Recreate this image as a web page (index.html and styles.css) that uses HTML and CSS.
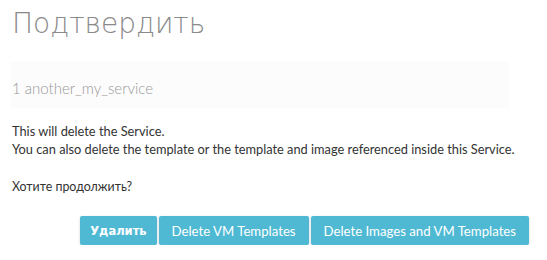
FILE: index.html
```html
<!DOCTYPE html>
<html lang="ru">
<head>
    <meta charset="UTF-8">
    <title>Подтвердить</title>
    <link rel="stylesheet" href="styles.css">
</head>
<body>
    <div class="dialog">
        <h2 class="dialog-title">Подтвердить</h2>
        <div class="dialog-body">
            <div class="resource-box">
                <span class="resource-name">1 another_my_service</span>
            </div>
            <p class="msg">This will delete the Service.<br>You can also delete the template or the template and image referenced inside this Service.</p>
            <p class="msg cyr">Хотите продолжить?</p>
        </div>
        <div class="dialog-actions">
            <button class="btn btn-main">Удалить</button>
            <button class="btn">Delete VM Templates</button>
            <button class="btn">Delete Images and VM Templates</button>
        </div>
    </div>
</body>
</html>
```

FILE: styles.css
```css
body {
    margin: 0;
    background: #fff;
    font-family: Lato, "DejaVu Sans", sans-serif;
    color: #333;
}
.dialog {
    padding: 6px 18px 0 12px;
}
.dialog-title {
    margin: 0;
    font-family: "DejaVu Sans", sans-serif;
    font-size: 28px;
    font-weight: 200;
    color: #8a8a8a;
    line-height: 36px;
}
.dialog-body {
    margin-top: 20px;
}
.resource-box {
    background: #fcfcfc;
    margin-left: -2px;
    margin-right: 20px;
    padding: 16px 2px 11px;
}
.resource-name {
    font-size: 15px;
    font-weight: 300;
    color: #999;
}
.msg {
    margin: 14px 0 20px;
    font-size: 12.8px;
    line-height: 18px;
}
.cyr {
    font-size: 12.4px;
}
.dialog-actions {
    display: flex;
    justify-content: flex-end;
    gap: 2px;
    margin-top: 20px;
}
.btn {
    background: #4fb9d4;
    color: #fff;
    border: none;
    border-radius: 2px;
    font-family: Lato, "DejaVu Sans", sans-serif;
    font-size: 13.2px;
    padding: 0 13px;
    height: 29px;
    box-shadow: 0 1px 3px rgba(0,0,0,0.15);
}
.btn-main {
    font-family: "DejaVu Sans", sans-serif;
    font-weight: bold;
    font-size: 11.5px;
    padding: 0 10px;
}
```
